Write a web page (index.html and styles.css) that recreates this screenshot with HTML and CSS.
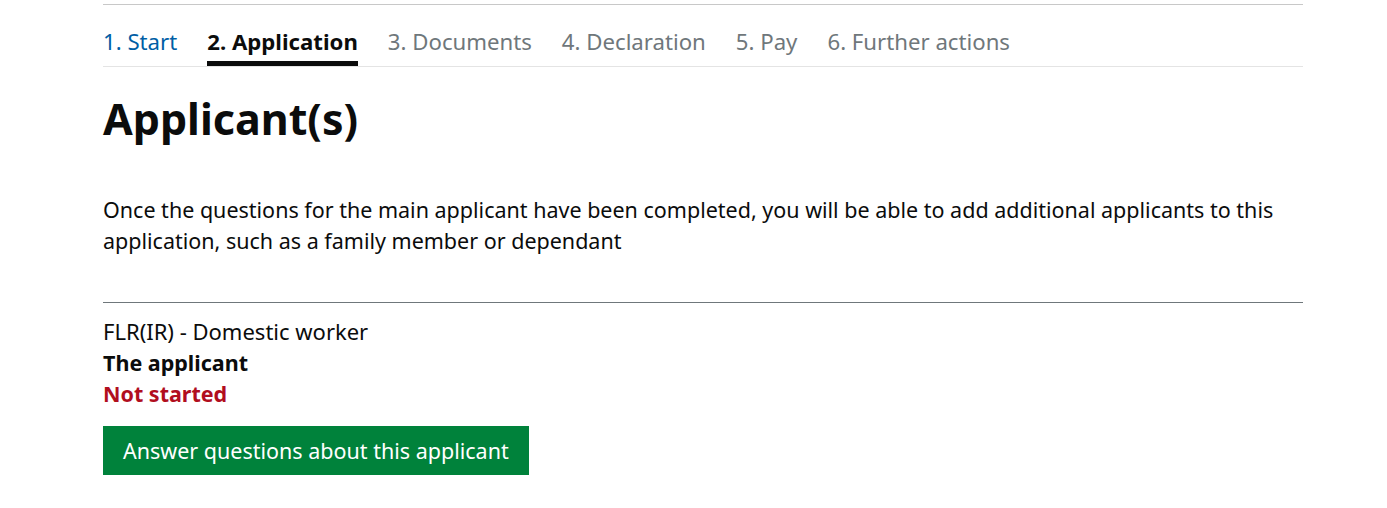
FILE: index.html
```html
<!DOCTYPE html>
<html lang="en">
<head>
  <meta charset="UTF-8">
  <title>Applicant(s)</title>
  <link rel="stylesheet" href="styles.css">
</head>
<body>
  <div class="page">
    <nav class="steps">
      <a class="step done" href="#">1. Start</a>
      <span class="step current">2. Application</span>
      <span class="step">3. Documents</span>
      <span class="step">4. Declaration</span>
      <span class="step">5. Pay</span>
      <span class="step">6. Further actions</span>
    </nav>

    <h1>Applicant(s)</h1>
    <p class="lead">Once the questions for the main applicant have been completed, you will be able to add additional applicants to this application, such as a family member or dependant</p>

    <div class="applicant">
      <div class="route">FLR(IR) - Domestic worker</div>
      <div class="who">The applicant</div>
      <div class="status">Not started</div>
      <button class="btn">Answer questions about this applicant</button>
    </div>
  </div>
</body>
</html>
```

FILE: styles.css
```css
body { margin: 0; background: #fff; color: #0b0c0c; font-family: "Noto Sans", "Liberation Sans", sans-serif; }
.page { width: 1200px; margin: 0 0 0 103px; padding-top: 4px; }
.steps {
  display: flex;
  gap: 30px;
  border-top: 1px solid #c8c8c8;
  border-bottom: 1px solid #e4e4e4;
  padding-top: 23px;
  height: 38px;
}
.step { font-size: 22.2px; color: #6f777b; text-decoration: none; line-height: 28px; height: 38px; box-sizing: border-box; }
.step.done { color: #005ea5; }
.step.current { color: #0b0c0c; font-weight: bold; border-bottom: 5px solid #0b0c0c; }
h1 { font-size: 43px; font-weight: bold; margin: 24px 0 0 0; line-height: 56px; }
.lead { font-size: 21.5px; line-height: 31px; margin: 47px 0 0 0; }
.applicant { margin-top: 46px; border-top: 1px solid #6f777b; padding-top: 13px; }
.route, .who, .status { font-size: 21.5px; line-height: 31px; }
.route { font-size: 22px; }
.who { font-weight: bold; }
.status { font-weight: bold; color: #b10e1e; }
.btn {
  margin-top: 17px;
  background: #00823b;
  color: #fff;
  border: none;
  box-shadow: 0 2px 0 #003618;
  font-family: inherit;
  font-size: 21.5px;
  padding: 0 20px;
  height: 49px;
  cursor: pointer;
}
```
